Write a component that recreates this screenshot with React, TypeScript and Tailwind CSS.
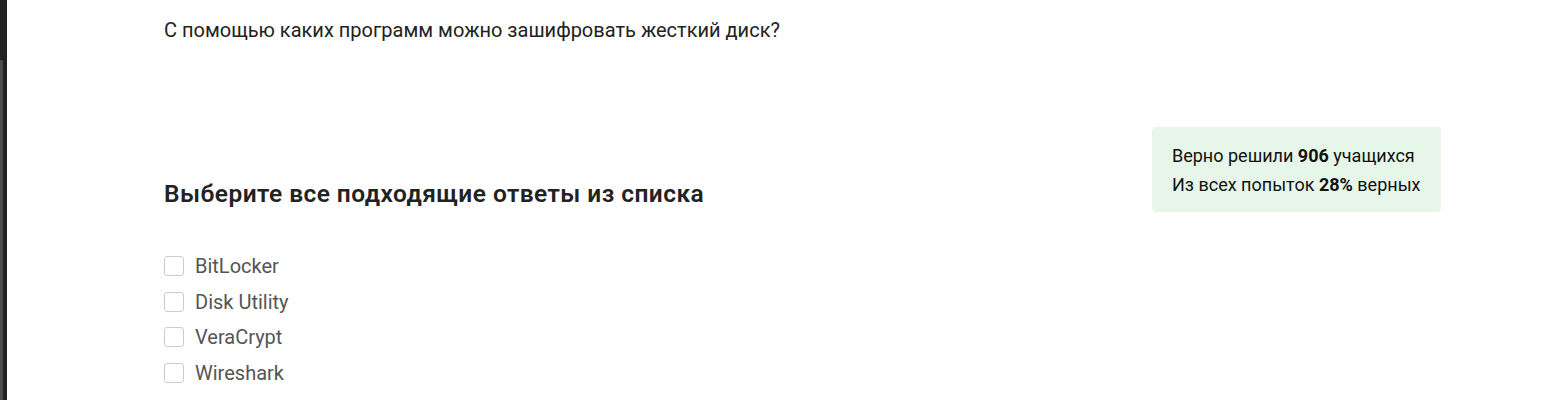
export default function App() {
  const options = ["BitLocker", "Disk Utility", "VeraCrypt", "Wireshark"];
  return (
    <div className="flex h-[400px] w-[1564px] overflow-hidden bg-white" style={{ fontFamily: "Roboto, 'Noto Sans', sans-serif" }}>
      <div className="flex h-full w-[7px] shrink-0 flex-col bg-[#222222]">
        <div className="h-[60px]" />
        <div className="ml-0 w-[3px] flex-1 rounded-tr-[2px] bg-[#4d4d4d]" />
      </div>
      <div className="flex flex-1 flex-col pl-[157px] pr-[123px]">
        <div className="pt-[17px] text-[20px] leading-[26px] text-[#222222]">
          С помощью каких программ можно зашифровать жесткий диск?
        </div>
        <div className="mt-[84px] flex items-start justify-between">
          <h2 className="mt-[52px] text-[24.5px] font-semibold leading-[30px] tracking-[0.45px] text-[#222222]">
            Выберите все подходящие ответы из списка
          </h2>
          <div className="flex h-[85px] w-[289px] flex-col justify-center rounded-[4px] bg-[#e6f7e9] pl-[20px] text-[18px] leading-[29px] text-[#111111]">
            <div>
              Верно решили <b className="font-bold">906</b> учащихся
            </div>
            <div>
              Из всех попыток <b className="font-bold">28%</b> верных
            </div>
          </div>
        </div>
        <div className="mt-[44px] flex flex-col gap-[15.7px]">
          {options.map((o) => (
            <label key={o} className="flex items-center gap-[11px]">
              <span className="h-[20px] w-[20px] rounded-[3px] border border-[#cccccc] bg-white" />
              <span className="text-[20px] leading-[20px] text-[#555555]">{o}</span>
            </label>
          ))}
        </div>
      </div>
    </div>
  );
}
